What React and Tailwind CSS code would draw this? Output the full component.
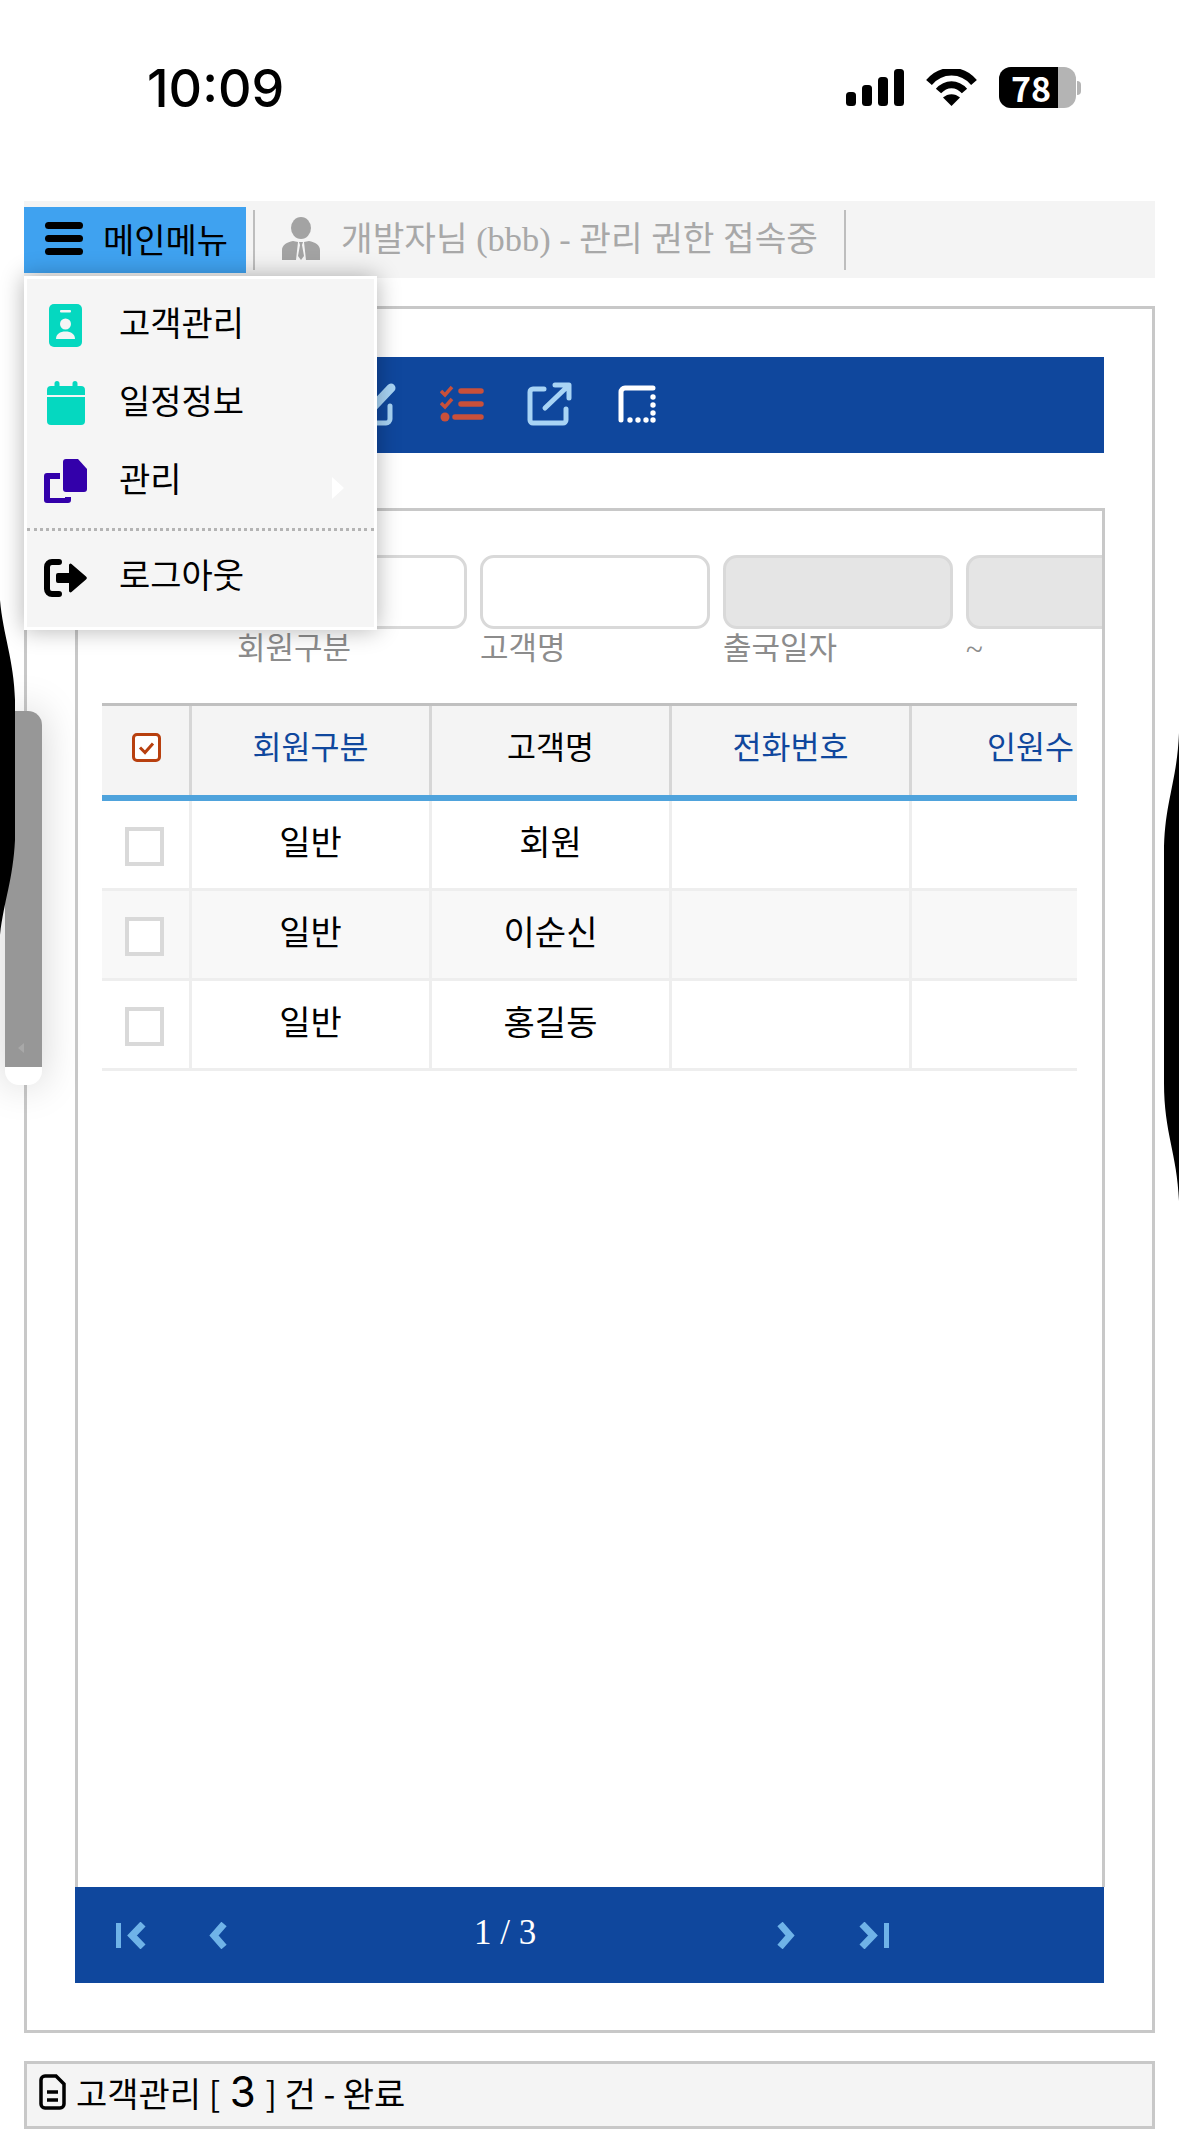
import React from "react";

const menuItems = [
  { label: "고객관리", icon: <BadgeIcon /> },
  { label: "일정정보", icon: <CalendarIcon /> },
  { label: "관리", icon: <CopyIcon />, more: true },
];

const rows = [
  { type: "일반", name: "회원", bg: "bg-white" },
  { type: "일반", name: "이순신", bg: "bg-[#f8f8f8]" },
  { type: "일반", name: "홍길동", bg: "bg-white" },
];

const filters = [
  { label: "회원구분", bg: "bg-white" },
  { label: "고객명", bg: "bg-white" },
  { label: "출국일자", bg: "bg-[#e5e5e5]" },
  { label: "~", bg: "bg-[#e5e5e5]", serif: true },
];

function BadgeIcon() {
  return (
    <svg width="33" height="43" viewBox="0 0 33 43">
      <rect width="33" height="43" rx="5" fill="#05d8c0" />
      <rect x="11" y="6" width="11" height="2.5" rx="1" fill="#f5f5f5" />
      <circle cx="16.5" cy="20" r="5.5" fill="#f5f5f5" />
      <path d="M7 35c0-5 4-7.500 9.500-7.500S26 30 26 35z" fill="#f5f5f5" />
    </svg>
  );
}

function CalendarIcon() {
  return (
    <svg width="38" height="44" viewBox="0 0 38 44">
      <path d="M10 0a2.500 2.500 0 0 1 2.500 2.500V5h13V2.500a2.500 2.500 0 0 1 5 0V5H34a4 4 0 0 1 4 4v5H0V9a4 4 0 0 1 4-4h3.500V2.500A2.500 2.500 0 0 1 10 0z" fill="#05d8c0" />
      <path d="M0 16h38v24a4 4 0 0 1-4 4H4a4 4 0 0 1-4-4z" fill="#05d8c0" />
    </svg>
  );
}

function CopyIcon() {
  return (
    <svg width="43" height="44" viewBox="0 0 43 44">
      <path d="M22 0h12l9 10v20a3 3 0 0 1-3 3H22a3 3 0 0 1-3-3V3a3 3 0 0 1 3-3z" fill="#3300aa" />
      <path d="M16 14H3a3 3 0 0 0-3 3v24a3 3 0 0 0 3 3h21a3 3 0 0 0 3-3v-3h-6v1H6V20h10z" fill="#3300aa" />
    </svg>
  );
}

function LogoutIcon() {
  return (
    <svg width="43" height="38" viewBox="0 0 43 38">
      <path d="M15 3H8a5 5 0 0 0-5 5v22a5 5 0 0 0 5 5h7" fill="none" stroke="#000" strokeWidth="6" strokeLinecap="round" />
      <path d="M14 14h11V6a1.500 1.500 0 0 1 2.500-1L42 17.500a2 2 0 0 1 0 3L27.500 33a1.500 1.500 0 0 1-2.500-1v-8H14a2 2 0 0 1-2-2v-6a2 2 0 0 1 2-2z" fill="#000" />
    </svg>
  );
}

function PersonIcon() {
  return (
    <svg width="38" height="43" viewBox="0 0 38 43">
      <ellipse cx="19" cy="11" rx="10" ry="11" fill="#a3a3a3" />
      <path d="M0 43V33c0-5 5-8 11-9l5 1-2 18zM38 43V33c0-5-5-8-11-9l-5 1 2 18z" fill="#a3a3a3" />
      <path d="M17 25h4l-1 3 2 11-3 4-3-4 2-11z" fill="#a3a3a3" />
    </svg>
  );
}

function FirstIcon({ flip }) {
  return (
    <svg width="32" height="27" viewBox="0 0 32 27" className={flip ? "rotate-180" : ""}>
      <path d="M2.500 1v25" stroke="#6fb3e8" strokeWidth="5" />
      <path d="M27 2 16 13.500 27 25" fill="none" stroke="#6fb3e8" strokeWidth="7" />
    </svg>
  );
}

function PrevIcon({ flip }) {
  return (
    <svg width="19" height="27" viewBox="0 0 19 27" className={flip ? "rotate-180" : ""}>
      <path d="M15 2 5 13.500 15 25" fill="none" stroke="#6fb3e8" strokeWidth="7" />
    </svg>
  );
}

function StatusIcons() {
  return (
    <div className="flex items-center">
      <svg width="58" height="37" viewBox="0 0 58 37">
        <rect x="0" y="23" width="10" height="14" rx="3.500" fill="#000" />
        <rect x="16" y="16" width="10" height="21" rx="3.500" fill="#000" />
        <rect x="32" y="8" width="10" height="29" rx="3.500" fill="#000" />
        <rect x="48" y="0" width="10" height="37" rx="3.500" fill="#000" />
      </svg>
      <svg width="51" height="37" viewBox="0 0 51 37" className="ml-[22px]">
        <path d="M3 13.500C15-1 36-1 48 13.500" fill="none" stroke="#000" strokeWidth="7.500" />
        <path d="M12.500 22C20 13.500 31 13.500 38.500 22" fill="none" stroke="#000" strokeWidth="7" />
        <path d="M17 28.500c5-4.500 12-4.500 17 0L25.500 37z" fill="#000" />
      </svg>
      <div className="ml-[22px] flex h-[41px] w-[77px] rounded-[12px] bg-[#b4b4b4]">
        <div className="flex h-full w-[59px] items-center justify-center rounded-l-[12px] bg-black pl-[5px] text-[34px] font-semibold leading-none text-white">78</div>
      </div>
      <div className="ml-[1px] h-[14px] w-[4px] rounded-r-full bg-[#b4b4b4]"></div>
    </div>
  );
}

function Menu() {
  return (
    <div className="absolute left-[24px] top-[276px] z-20 h-[354px] w-[353px] border-[3px] border-white bg-[#f5f5f5] pt-[7px] shadow-[0_0_22px_rgba(0,0,0,0.3)]">
      {menuItems.map((item) => (
        <div key={item.label} className="relative flex h-[78px] w-full items-center">
          <div className="mr-[15px] flex w-[77px] shrink-0 items-center justify-center">{item.icon}</div>
          <span className="pb-[6px] text-[34px] leading-none text-black">{item.label}</span>
          {item.more && (
            <div className="absolute left-[305px] top-[35px] h-0 w-0 border-y-[11px] border-l-[12px] border-y-transparent border-l-white"></div>
          )}
        </div>
      ))}
      <div className="mt-[8px] border-t-[3px] border-dotted border-[#b4b4b4]"></div>
      <div className="flex h-[94px] items-center">
        <div className="mr-[15px] flex w-[77px] shrink-0 items-center justify-center">
          <LogoutIcon />
        </div>
        <span className="pb-[8px] text-[34px] leading-none text-black">로그아웃</span>
      </div>
    </div>
  );
}

function Toolbar() {
  return (
    <div className="flex h-[96px] w-[1029px] items-center bg-[#0f479d] pb-[2px] pl-[277px]">
      <svg width="44" height="44" viewBox="0 0 44 44">
        <path d="M38 24v13a4 4 0 0 1-4 4H6" fill="none" stroke="#a8d4f5" strokeWidth="5" strokeLinecap="round" />
        <path d="M22 24 39 6" stroke="#a8d4f5" strokeWidth="9" strokeLinecap="round" />
      </svg>
      <svg width="44" height="38" viewBox="0 0 44 38" className="ml-[44px]">
        <path d="M1 6l4 4 7-8M1 18l4 4 7-8" fill="none" stroke="#c9503a" strokeWidth="3.500" />
        <circle cx="5" cy="32" r="4.500" fill="#c9503a" />
        <path d="M21 6h20M21 19h20M15 32h26" stroke="#c9503a" strokeWidth="5.500" strokeLinecap="round" />
      </svg>
      <svg width="45" height="44" viewBox="0 0 45 44" className="ml-[43px]">
        <path d="M17 7H6a3 3 0 0 0-3 3v28a3 3 0 0 0 3 3h30a3 3 0 0 0 3-3V27" fill="none" stroke="#a8d4f5" strokeWidth="5" strokeLinecap="round" />
        <path d="M18 26 41 4M28 3h14v13" fill="none" stroke="#a8d4f5" strokeWidth="5" strokeLinecap="round" strokeLinejoin="round" />
      </svg>
      <svg width="38" height="38" viewBox="0 0 38 38" className="ml-[46px]">
        <path d="M35 3H7a4 4 0 0 0-4 4v28" fill="none" stroke="#fff" strokeWidth="5" strokeLinecap="round" />
        <circle cx="35" cy="12" r="2.700" fill="#fff" />
        <circle cx="35" cy="20" r="2.700" fill="#fff" />
        <circle cx="35" cy="28" r="2.700" fill="#fff" />
        <circle cx="35" cy="35" r="2.700" fill="#fff" />
        <circle cx="12" cy="35" r="2.700" fill="#fff" />
        <circle cx="20" cy="35" r="2.700" fill="#fff" />
        <circle cx="28" cy="35" r="2.700" fill="#fff" />
      </svg>
    </div>
  );
}

function Filters() {
  return (
    <div className="flex gap-[13px] pl-[159px]">
      {filters.map((f) => (
        <div key={f.label} className="w-[230px] shrink-0">
          <div className={`h-[74px] rounded-[14px] border-[3px] border-[#d9d9d9] ${f.bg}`}></div>
          <div className={`h-[34px] text-[31px] leading-[34px] text-[#8c8c8c] ${f.serif ? "pt-[4px] font-['Liberation_Serif',serif]" : ""}`}>{f.label}</div>
        </div>
      ))}
    </div>
  );
}

function Table() {
  const cellHead = "flex w-[240px] shrink-0 items-center justify-center border-r-[3px] border-[#d6d6d6] pb-[10px] text-[31.5px] leading-none";
  const cellBody = "flex w-[240px] shrink-0 items-center justify-center border-r-[3px] border-[#eeeeee] pb-[8px] text-[34px] leading-none text-black";
  return (
    <div className="ml-[24px] mt-[40px] w-[975px] overflow-hidden">
      <div className="flex h-[98px] w-[1050px] border-t-[3px] border-b-[6px] border-t-[#c0c0c0] border-b-[#4fa3dc] bg-[#f4f4f4]">
        <div className="flex w-[90px] shrink-0 items-center justify-center border-r-[3px] border-[#d6d6d6] pb-[6px]">
          <svg width="29" height="29" viewBox="0 0 29 29" className="ml-[1px]">
            <rect x="1.500" y="1.500" width="26" height="26" rx="3.500" fill="#fff" stroke="#b8400f" strokeWidth="3" />
            <path d="M8 14.500l5 5 8-9" fill="none" stroke="#b8400f" strokeWidth="3" />
          </svg>
        </div>
        <div className={`${cellHead} text-[#0f479d]`}>회원구분</div>
        <div className={`${cellHead} text-black`}>고객명</div>
        <div className={`${cellHead} text-[#0f479d]`}>전화번호</div>
        <div className={`${cellHead} text-[#0f479d]`}>인원수</div>
      </div>
      {rows.map((r) => (
        <div key={r.name} className={`flex h-[90px] w-[1050px] border-b-[3px] border-[#eeeeee] ${r.bg}`}>
          <div className="flex w-[90px] shrink-0 items-center justify-center border-r-[3px] border-[#eeeeee] pt-[3px]">
            <div className="mr-[3px] h-[39px] w-[39px] border-[4px] border-[#d9d9d9] bg-white"></div>
          </div>
          <div className={cellBody}>{r.type}</div>
          <div className={cellBody}>{r.name}</div>
          <div className={cellBody}></div>
          <div className={cellBody}></div>
        </div>
      ))}
    </div>
  );
}

function Pagination() {
  return (
    <div className="flex h-[96px] w-[1029px] items-center bg-[#0f479d] pl-[41px]">
      <FirstIcon />
      <div className="ml-[61px]">
        <PrevIcon />
      </div>
      <div className="ml-[246px] w-[60px] pb-[6px] text-center font-['Liberation_Serif',serif] text-[35px] leading-none whitespace-nowrap text-white">1 / 3</div>
      <div className="ml-[242px]">
        <PrevIcon flip />
      </div>
      <div className="ml-[62px]">
        <FirstIcon flip />
      </div>
    </div>
  );
}

export default function App() {
  return (
    <div className="relative h-[2149px] w-[1179px] overflow-hidden bg-white font-['Noto_Sans_CJK_KR','Inter',sans-serif]">
      {/* status bar */}
      <div className="flex h-[201px] items-start justify-between pl-[147px] pr-[98px] pt-[61px]">
        <div className="font-['Inter',sans-serif] text-[52px] font-medium leading-[56px] text-black">10:09</div>
        <div className="pt-[6px]">
          <StatusIcons />
        </div>
      </div>

      {/* top bar */}
      <div className="mx-[24px] flex h-[77px] items-start bg-[#f4f4f4] pt-[6px]">
        <div className="flex h-[66px] w-[222px] items-center bg-[#3fa2f0] pb-[3px] pl-[21px]">
          <div className="flex w-[38px] flex-col gap-[6px]">
            <div className="h-[7px] rounded-full bg-black"></div>
            <div className="h-[7px] rounded-full bg-black"></div>
            <div className="h-[7px] rounded-full bg-black"></div>
          </div>
          <span className="ml-[20px] text-[34px] leading-none whitespace-nowrap text-black">메인메뉴</span>
        </div>
        <div className="ml-[7px] mt-[3px] h-[60px] w-[2px] bg-[#bdbdbd]"></div>
        <div className="ml-[27px] mt-[10px]">
          <PersonIcon />
        </div>
        <div className="ml-[21px] mt-[12px] font-['Liberation_Serif','Noto_Sans_CJK_KR',serif] text-[34.4px] leading-[40px] whitespace-nowrap text-[#a8a8a8]">개발자님 (bbb) - 관리 권한 접속중</div>
        <div className="ml-[26px] mt-[3px] h-[60px] w-[2px] bg-[#bdbdbd]"></div>
      </div>

      {/* main panel */}
      <div className="mx-[24px] mt-[28px] h-[1727px] border-[3px] border-[#c8c8c8] bg-white px-[48px] pt-[48px]">
        <Toolbar />
        <div className="mt-[55px] h-[1379px] w-[1030px] overflow-hidden border-x-[3px] border-t-[3px] border-[#c8c8c8] pt-[44px]">
          <Filters />
          <Table />
        </div>
        <Pagination />
      </div>

      {/* status line */}
      <div className="mx-[24px] mt-[28px] flex h-[68px] items-center border-[3px] border-[#c8c8c8] bg-[#f4f4f4] pl-[12px] text-[34px] leading-none text-black">
        <svg width="27" height="36" viewBox="0 0 27 36" className="mb-[6px]">
          <path d="M6 2h11l8 8v20a4 4 0 0 1-4 4H6a4 4 0 0 1-4-4V6a4 4 0 0 1 4-4z" fill="none" stroke="#000" strokeWidth="3.500" />
          <path d="M8 18h11M8 26h11" stroke="#000" strokeWidth="3.500" />
        </svg>
        <span className="mb-[6px] ml-[10px] whitespace-nowrap">
          고객관리 [ <span className="mx-[2px] font-['Inter',sans-serif] text-[42px]">3</span> ] 건 - 완료
        </span>
      </div>

      {/* side handle */}
      <div className="absolute left-[5px] top-[711px] z-10 flex h-[374px] w-[37px] flex-col overflow-hidden rounded-b-[14px] rounded-tr-[14px] bg-white shadow-[0_0_40px_rgba(0,0,0,0.18)]">
        <div className="relative h-[356px] bg-[#979797]">
          <div className="absolute bottom-[14px] left-[13px] h-0 w-0 border-y-[5px] border-r-[6px] border-y-transparent border-r-[#a8a8a8]"></div>
        </div>
      </div>

      {/* phone case edges */}
      <svg width="18" height="340" viewBox="0 0 18 340" className="absolute left-0 top-[600px] z-10">
        <path d="M0 0C3 35 14 60 15 100V240C13 280 4 300 0 335z" fill="#000" />
      </svg>
      <svg width="16" height="470" viewBox="0 0 16 470" className="absolute right-0 top-[733px] z-10">
        <path d="M16 0C14 50 1 70 1 120V350C1 400 14 420 16 468z" fill="#000" />
      </svg>

      <Menu />
    </div>
  );
}
